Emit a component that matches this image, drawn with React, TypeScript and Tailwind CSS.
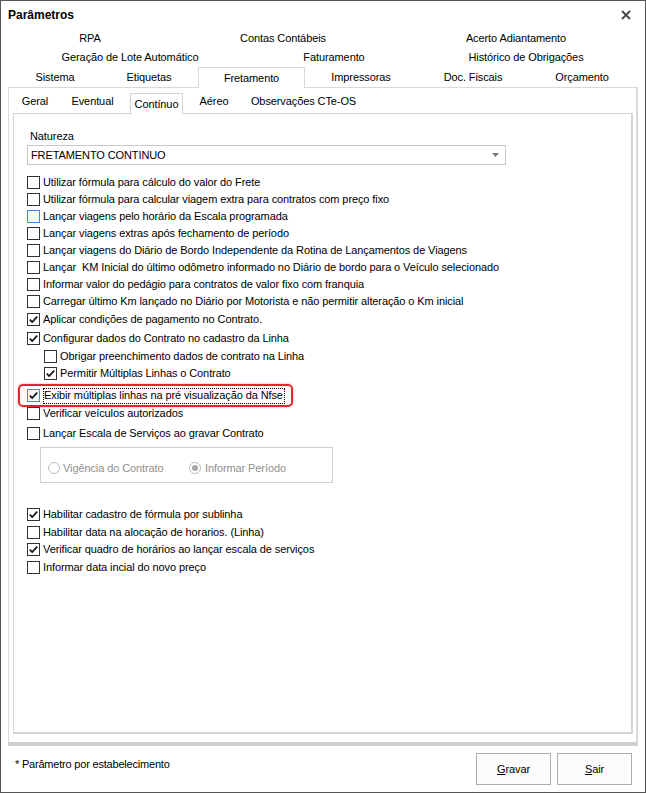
import React from "react";

type Row = { label: string; checked?: boolean; indent?: boolean; mt?: string; hover?: boolean; highlight?: boolean };

function CheckBox({ checked, hover }: { checked?: boolean; hover?: boolean }) {
  return (
    <div
      className={
        "w-[13px] h-[13px] shrink-0 border flex items-center justify-center " +
        (hover ? "border-[#3d8de0] bg-[#f4f9ff]" : "border-[#333333] bg-white")
      }
    >
      {checked && (
        <svg width="11" height="11" viewBox="0 0 11 11">
          <polyline points="1.8,5.6 4.2,8 9.2,2.6" fill="none" stroke="#111" strokeWidth="1.7" />
        </svg>
      )}
    </div>
  );
}

function CheckRow({ r }: { r: Row }) {
  return (
    <div className={"relative flex items-center h-[17px] gap-[3px] " + (r.indent ? "ml-[17px] " : "") + (r.mt ?? "")}>
      {r.highlight && (
        <div className="absolute left-[-9px] top-[-3px] w-[275px] h-[23px] border-2 border-[#e3262b] rounded-[5px] shadow-[0_0_2px_rgba(227,38,43,0.5)]" />
      )}
      <CheckBox checked={r.checked} hover={r.hover} />
      {r.highlight ? (
        <span className="border border-dotted border-black h-[16px] flex items-center pr-[1px] whitespace-pre">{r.label}</span>
      ) : (
        <span className="whitespace-pre">{r.label}</span>
      )}
    </div>
  );
}

function Radio({ selected }: { selected?: boolean }) {
  return (
    <div className="w-[12px] h-[12px] rounded-full border border-[#bcbcbc] bg-white flex items-center justify-center shrink-0">
      {selected && <div className="w-[6px] h-[6px] rounded-full bg-[#a8a8a8]" />}
    </div>
  );
}

export default function App() {
  const rowsA: Row[] = [
    { label: "Utilizar fórmula para cálculo do valor do Frete" },
    { label: "Utilizar fórmula para calcular viagem extra para contratos com preço fixo" },
    { label: "Lançar viagens pelo horário da Escala programada", hover: true },
    { label: "Lançar viagens extras após fechamento de período" },
    { label: "Lançar viagens do Diário de Bordo Independente da Rotina de Lançamentos de Viagens" },
    { label: "Lançar  KM Inicial do último odômetro informado no Diário de bordo para o Veículo selecionado" },
    { label: "Informar valor do pedágio para contratos de valor fixo com franquia" },
    { label: "Carregar último Km lançado no Diário por Motorista e não permitir alteração o Km inicial" },
    { label: "Aplicar condições de pagamento no Contrato.", checked: true, mt: "mt-[1px]" },
    { label: "Configurar dados do Contrato no cadastro da Linha", checked: true, mt: "mt-[2px]" },
    { label: "Obrigar preenchimento dados de contrato na Linha", indent: true, mt: "mt-[1px]" },
    { label: "Permitir Múltiplas Linhas o Contrato", indent: true, checked: true },
    { label: "Exibir múltiplas linhas na pré visualização da Nfse", checked: true, hover: true, highlight: true, mt: "mt-[5px]" },
    { label: "Verificar veículos autorizados", mt: "mt-[1px]" },
    { label: "Lançar Escala de Serviços ao gravar Contrato", mt: "mt-[3px]" },
  ];
  const rowsB: Row[] = [
    { label: "Habilitar cadastro de fórmula por sublinha", checked: true, mt: "mt-[23px]" },
    { label: "Habilitar data na alocação de horarios. (Linha)", mt: "mt-[1px]" },
    { label: "Verificar quadro de horários ao lançar escala de serviços", checked: true },
    { label: "Informar data incial do novo preço", mt: "mt-[1px]" },
  ];

  return (
    <div className="w-[646px] h-[793px] border border-[#555555] bg-white flex flex-col text-[11px] tracking-[-0.1px] text-black font-['Liberation_Sans',Arial,sans-serif] overflow-hidden">
      {/* Title bar */}
      <div className="h-[28px] shrink-0 flex items-center justify-between pl-[7px] pr-[14px]">
        <span className="font-bold text-[12px] tracking-normal leading-[14px]">Parâmetros</span>
        <svg width="10" height="10" viewBox="0 0 10 10">
          <path d="M1 1 L9 9 M9 1 L1 9" stroke="#444" strokeWidth="1.8" />
        </svg>
      </div>

      {/* Tab rows */}
      <div className="flex h-[19px] pl-[9px] items-center shrink-0">
        <div className="w-[160px] text-center">RPA</div>
        <div className="w-[226px] text-center">Contas Contábeis</div>
        <div className="w-[240px] text-center">Acerto Adiantamento</div>
      </div>
      <div className="flex h-[19px] pl-[9px] items-center shrink-0">
        <div className="w-[240px] text-center">Geração de Lote Automático</div>
        <div className="w-[168px] text-center">Faturamento</div>
        <div className="w-[216px] text-center">Histórico de Obrigações</div>
      </div>
      <div className="flex h-[20px] pl-[9px] items-center shrink-0">
        <div className="w-[90px] text-center">Sistema</div>
        <div className="w-[98px] text-center">Etiquetas</div>
        <div className="relative z-10 w-[107px] h-[21px] mt-[1px] bg-white border-t border-l border-r border-[#d9d9d9] flex items-start justify-center pt-[2px]">
          Fretamento
        </div>
        <div className="w-[112px] text-center">Impressoras</div>
        <div className="w-[112px] text-center">Doc. Fiscais</div>
        <div className="w-[106px] text-center">Orçamento</div>
      </div>

      {/* Tab panel */}
      <div className="ml-[7px] w-[630px] h-[659px] shrink-0 border border-[#d9d9d9] border-r-2 border-b-[4px] border-b-[#cfcfcf] flex flex-col">
        {/* Sub tabs */}
        <div className="h-[25px] flex items-center pl-[4px] shrink-0">
          <div className="w-[44px] text-center pt-[1px]">Geral</div>
          <div className="w-[71px] text-center pt-[1px]">Eventual</div>
          <div className="w-[2px]" />
          <div className="relative z-10 self-end w-[53px] h-[21px] mb-[-1px] bg-white border-l border-r border-t border-[#d4d4d4] flex justify-center pt-[2px]">
            Contínuo
          </div>
          <div className="w-[62px] text-center pt-[1px]">Aéreo</div>
          <div className="w-[117px] text-center pt-[1px]">Observações CTe-OS</div>
        </div>

        {/* Inner page */}
        <div className="ml-[4px] w-[620px] h-[621px] border border-[#d4d4d4] border-r-2 border-b-2 flex flex-col">
          <div className="pl-[16px] pt-[15px] leading-[14px]">Natureza</div>
          <div className="ml-[13px] mt-[2px] w-[479px] h-[20px] border border-[#c9c9c9] flex items-center justify-between pl-[3px] pr-[6px]">
            <span>FRETAMENTO CONTINUO</span>
            <svg width="7" height="4" viewBox="0 0 7 4">
              <path d="M0 0 L7 0 L3.5 4 Z" fill="#7a7a7a" />
            </svg>
          </div>

          <div className="pl-[13px] mt-[9px] flex flex-col">
            {rowsA.map((r, i) => (
              <CheckRow key={i} r={r} />
            ))}

            {/* Radio group */}
            <div className="ml-[13px] mt-[5px] w-[293px] h-[36px] border border-[#d0d0d0] flex items-center pt-[6px] pl-[7px] text-[#8f8f8f]">
              <div className="w-[141px] flex items-center gap-[3px]">
                <Radio />
                <span>Vigência do Contrato</span>
              </div>
              <div className="flex items-center gap-[4px]">
                <Radio selected />
                <span>Informar Período</span>
              </div>
            </div>

            {rowsB.map((r, i) => (
              <CheckRow key={i} r={r} />
            ))}
          </div>
        </div>
      </div>

      {/* Footer */}
      <div className="flex-1 flex items-start justify-between pl-[14px] pr-[13px] pt-[7px]">
        <div className="h-[23px] flex items-center text-[11px] tracking-[-0.2px]">* Parâmetro por estabelecimento</div>
        <div className="flex gap-[6px]">
          <button className="w-[75px] h-[32px] border border-[#adadad] bg-[#fbfbfb] text-[11px]">
            <span className="underline">G</span>ravar
          </button>
          <button className="w-[75px] h-[32px] border border-[#adadad] bg-[#fbfbfb] text-[11px]">
            <span className="underline">S</span>air
          </button>
        </div>
      </div>
    </div>
  );
}
